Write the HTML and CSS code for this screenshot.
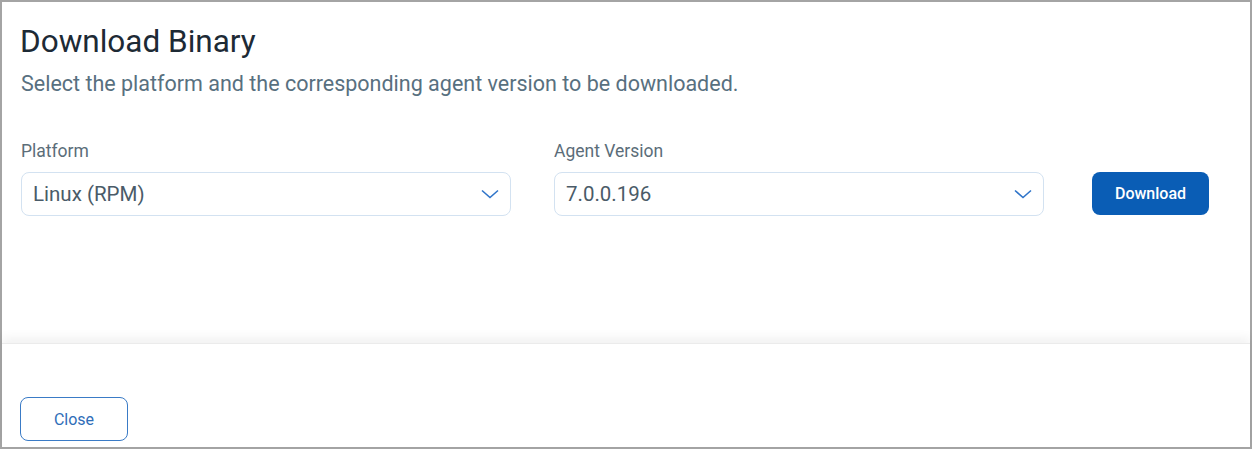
FILE: index.html
```html
<!DOCTYPE html>
<html>
<head>
<meta charset="utf-8">
<title>Download Binary</title>
<link rel="stylesheet" href="styles.css">
</head>
<body>
<div class="dialog">
  <div class="dialog-body">
    <h1 class="title">Download Binary</h1>
    <p class="subtitle">Select the platform and the corresponding agent version to be downloaded.</p>

    <div class="form-row">
      <div class="field">
        <label class="field-label">Platform</label>
        <div class="select">
          <span class="select-value">Linux (RPM)</span>
          <svg class="chevron" width="18" height="10" viewBox="0 0 18 10">
            <polyline points="1,1.5 9,8.5 17,1.5" fill="none" stroke="#2f74c9" stroke-width="1.6"/>
          </svg>
        </div>
      </div>
      <div class="field">
        <label class="field-label">Agent Version</label>
        <div class="select">
          <span class="select-value">7.0.0.196</span>
          <svg class="chevron" width="18" height="10" viewBox="0 0 18 10">
            <polyline points="1,1.5 9,8.5 17,1.5" fill="none" stroke="#2f74c9" stroke-width="1.6"/>
          </svg>
        </div>
      </div>
      <button class="btn btn-primary">Download</button>
    </div>
  </div>

  <div class="dialog-footer">
    <button class="btn btn-outline">Close</button>
  </div>
</div>
</body>
</html>
```

FILE: styles.css
```css
html, body {
  margin: 0;
  padding: 0;
  background: #ffffff;
}

body {
  font-family: Roboto, "Liberation Sans", sans-serif;
}

.dialog {
  box-sizing: border-box;
  width: 1252px;
  height: 449px;
  border: 2px solid #a4a4a4;
  display: flex;
  flex-direction: column;
}

.dialog-body {
  height: 341px;
  padding: 21px 18px 0 19px;
  box-sizing: border-box;
}

.title {
  margin: 0 0 0 -1px;
  font-size: 31.5px;
  line-height: 38px;
  font-weight: 400;
  color: #1d2a35;
}

.subtitle {
  margin: 10px 0 0 0;
  font-size: 21.5px;
  line-height: 26px;
  color: #587080;
}

.form-row {
  display: flex;
  align-items: flex-end;
  margin-top: 44px;
}

.field {
  width: 490px;
  margin-right: 43px;
  display: flex;
  flex-direction: column;
}

.field-label {
  font-size: 17.5px;
  line-height: 20px;
  color: #5b6d79;
  margin-bottom: 11px;
}

.select {
  box-sizing: border-box;
  height: 44px;
  border: 1px solid #d3e2f1;
  border-radius: 8px;
  display: flex;
  align-items: center;
  justify-content: space-between;
  padding: 0 11px 0 11px;
}

.select-value {
  font-size: 20.5px;
  color: #4a5b68;
}

.chevron {
  display: block;
}

.btn {
  box-sizing: border-box;
  height: 43px;
  border-radius: 8px;
  font-family: Roboto, "Liberation Sans", sans-serif;
  font-size: 16px;
  cursor: pointer;
}

.btn-primary {
  width: 117px;
  margin-left: 5px;
  margin-bottom: 1px;
  background: #0a5db5;
  border: none;
  color: #ffffff;
  font-weight: 500;
}

.dialog-footer {
  flex: 1;
  border-top: 1px solid #ebebeb;
  box-shadow: 0 -6px 9px rgba(0, 0, 0, 0.05);
  padding: 0 18px 6px 18px;
  display: flex;
  align-items: flex-end;
}

.btn-outline {
  width: 108px;
  height: 44px;
  background: #ffffff;
  border: 1px solid #3a7bc6;
  color: #2f6eb8;
}
```
